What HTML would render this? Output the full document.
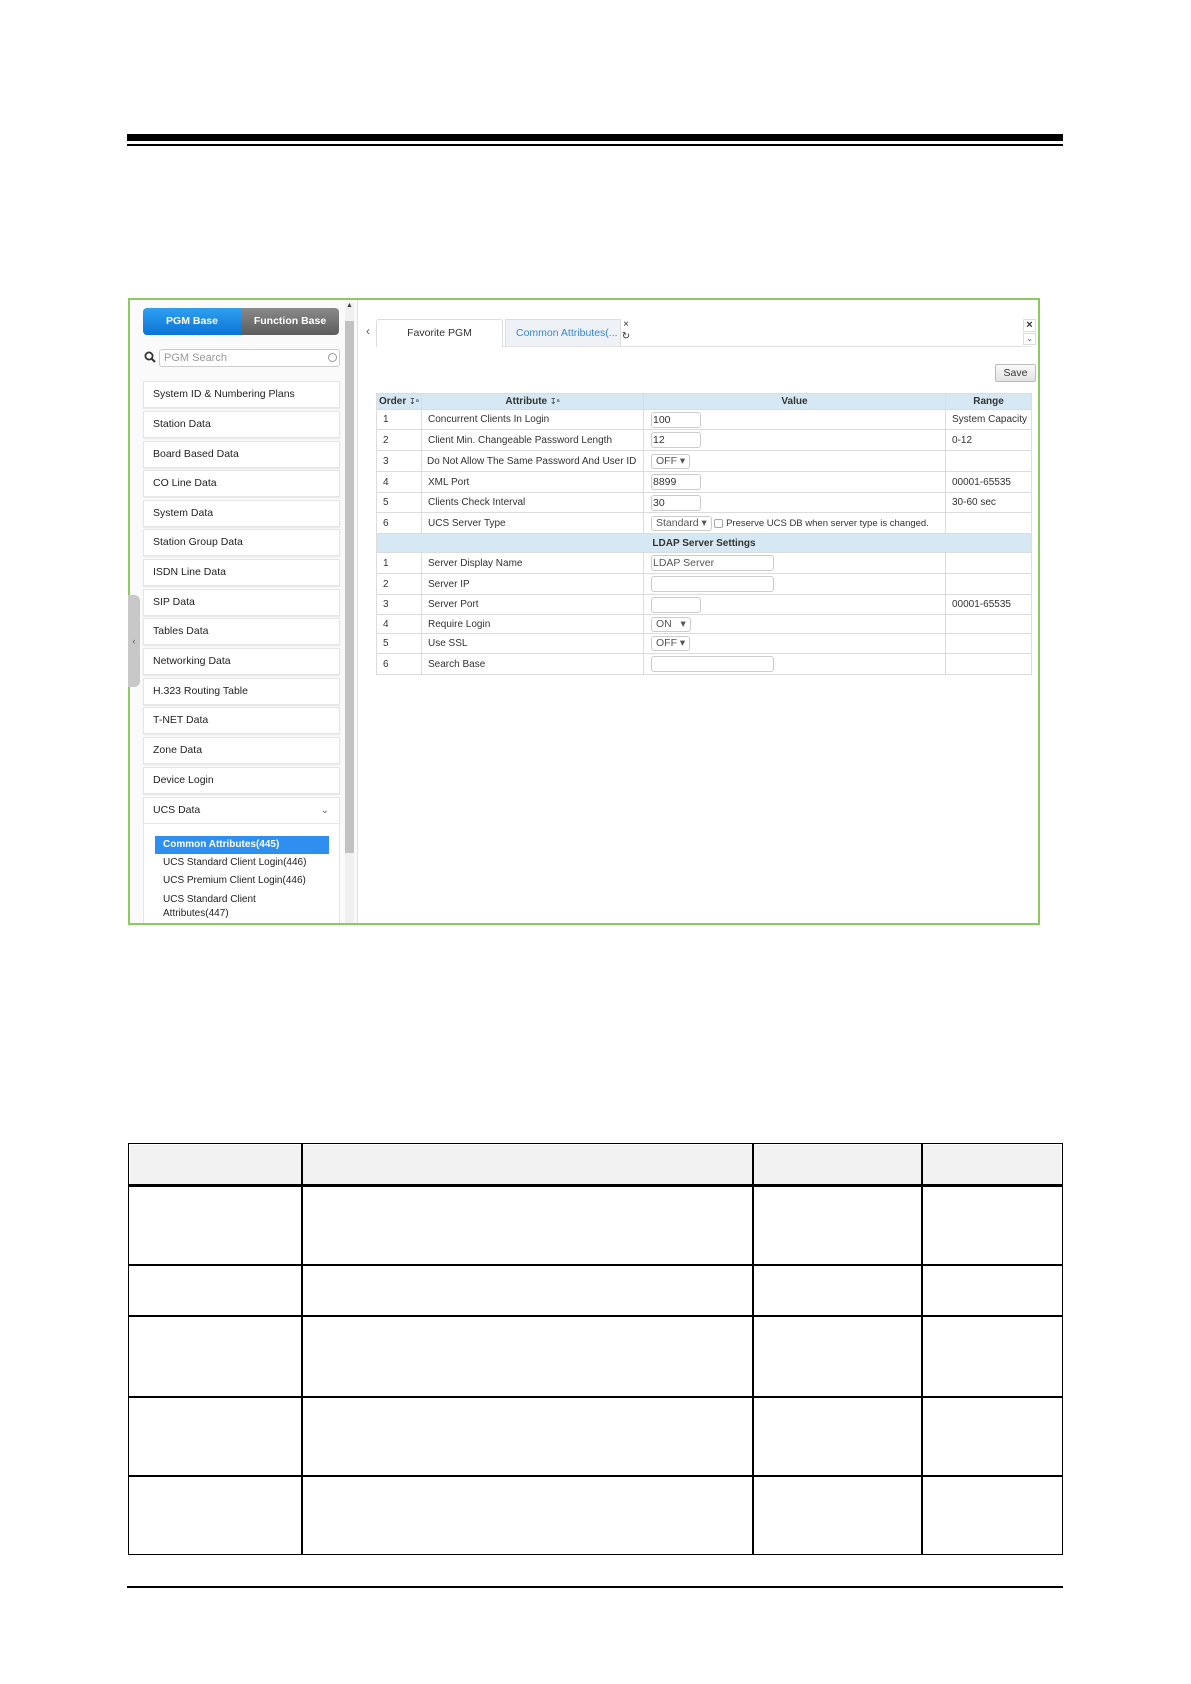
<!DOCTYPE html>
<html><head><meta charset="utf-8"><style>
*{box-sizing:border-box;margin:0;padding:0}
body{width:1191px;height:1684px;background:#fff;position:relative;font-family:"Liberation Sans",Arial,sans-serif;overflow:hidden}
.a{position:absolute}
.item{position:absolute;left:143px;width:197px;height:27px;background:#fff;border:1px solid #e6e6e6;box-shadow:0 1px 1px rgba(0,0,0,.08);font-size:10.5px;color:#222;padding-left:9px;line-height:25px}
.sub{position:absolute;left:155px;font-size:10px;color:#222}
table.t{position:absolute;left:376px;top:393px;width:655px;border-collapse:collapse;table-layout:fixed;font-size:10px;color:#333}
table.t td{border:1px solid #dcdcdc;padding:0 0 0 6px;white-space:nowrap;overflow:hidden}
table.t tr.h td{background:#d6e8f4;font-weight:bold;text-align:center;padding:0}
.inp{display:inline-block;border:1px solid #ccc;border-radius:3px;height:16px;vertical-align:middle;font-size:10.5px;line-height:14px;padding-left:1px;background:#fff;color:#333}
.sel{display:inline-block;border:1px solid #ccc;border-radius:3px;height:15px;font-size:10.5px;line-height:13px;padding:0 4px;color:#555;vertical-align:middle;background:#fff}
</style></head><body>
<div class="a" style="left:127px;top:134px;width:936px;height:7px;background:#000"></div>
<div class="a" style="left:127px;top:144px;width:936px;height:2px;background:#000"></div>

<div class="a" style="left:128px;top:298px;width:912px;height:627px;border:2px solid #8dc960;background:#fff"></div>
<div class="a" style="left:130px;top:300px;width:228px;height:623px;background:#fafafa"></div>
<div class="a" style="left:357px;top:300px;width:1px;height:623px;background:#e0e0e0"></div>
<div class="a" style="left:128px;top:595px;width:12px;height:92px;background:#c8c8c8;border-radius:0 6px 6px 0;font-size:9px;color:#555;line-height:92px;text-align:center">&lsaquo;</div>
<div class="a" style="left:345px;top:303px;width:9px;height:620px;background:#f0f0f0"></div>
<div class="a" style="left:345px;top:321px;width:9px;height:532px;background:#c2c2c2"></div>
<div class="a" style="left:346px;top:302px;font-size:7px;color:#444">&#9650;</div>
<div class="a" style="left:143px;top:308px;width:98px;height:27px;background:linear-gradient(#2fa0f0,#0b74d6);border-radius:4px 0 0 4px;color:#fff;font-size:10.5px;font-weight:bold;text-align:center;line-height:27px">PGM Base</div>
<div class="a" style="left:241px;top:308px;width:98px;height:27px;background:linear-gradient(#8a8a8a,#5c5c5c);border-radius:0 4px 4px 0;color:#fff;font-size:10.5px;font-weight:bold;text-align:center;line-height:27px">Function Base</div>
<svg class="a" style="left:144px;top:351px" width="12" height="12"><circle cx="5" cy="5" r="3.6" fill="none" stroke="#333" stroke-width="1.8"/><line x1="7.5" y1="7.5" x2="11" y2="11" stroke="#333" stroke-width="2"/></svg>
<div class="a" style="left:159px;top:349px;width:181px;height:18px;border:1px solid #ccc;border-radius:3px;background:#fff;font-size:11px;color:#999;padding-left:4px;line-height:16px">PGM Search</div>
<div class="a" style="left:328px;top:353px;width:9px;height:9px;border:1.5px solid #999;border-radius:50%"></div>

<div class="item" style="top:381px">System ID &amp; Numbering Plans</div>
<div class="item" style="top:411px">Station Data</div>
<div class="item" style="top:441px">Board Based Data</div>
<div class="item" style="top:470px">CO Line Data</div>
<div class="item" style="top:500px">System Data</div>
<div class="item" style="top:529px">Station Group Data</div>
<div class="item" style="top:559px">ISDN Line Data</div>
<div class="item" style="top:589px">SIP Data</div>
<div class="item" style="top:618px">Tables Data</div>
<div class="item" style="top:648px">Networking Data</div>
<div class="item" style="top:678px">H.323 Routing Table</div>
<div class="item" style="top:707px">T-NET Data</div>
<div class="item" style="top:737px">Zone Data</div>
<div class="item" style="top:767px">Device Login</div>
<div class="item" style="top:797px">UCS Data<span style="position:absolute;right:10px;top:0;font-size:10px;color:#666">&#8964;</span></div>
<div class="a" style="left:143px;top:824px;width:197px;height:99px;background:#fff;border-left:1px solid #e6e6e6;border-right:1px solid #e6e6e6"></div>
<div class="a" style="left:155px;top:836px;width:174px;height:18px;background:#2f8ff0;color:#fff;font-size:10px;font-weight:bold;padding-left:8px;line-height:18px">Common Attributes(445)</div>
<div class="sub" style="left:163px;top:857px">UCS Standard Client Login(446)</div>
<div class="sub" style="left:163px;top:875px">UCS Premium Client Login(446)</div>
<div class="sub" style="left:163px;top:893px;line-height:14px">UCS Standard Client<br>Attributes(447)</div>

<div class="a" style="left:366px;top:324px;font-size:12px;color:#555">&lsaquo;</div>
<div class="a" style="left:376px;top:346px;width:655px;height:1px;background:#e3e3e3"></div>
<div class="a" style="left:376px;top:319px;width:127px;height:28px;border:1px solid #ddd;border-bottom:none;border-radius:3px 3px 0 0;background:#fff;font-size:10.5px;color:#333;text-align:center;line-height:26px">Favorite PGM</div>
<div class="a" style="left:505px;top:319px;width:116px;height:27px;border:1px solid #ddd;border-bottom:none;background:#eef2f6;font-size:10.5px;color:#3a86d0;padding-left:10px;line-height:26px;white-space:nowrap;overflow:hidden">Common Attributes(...</div>
<div class="a" style="left:621px;top:319px;font-size:10px;color:#333;line-height:12px;text-align:center;width:10px">&#215;<br>&#8635;</div>
<div class="a" style="left:1023px;top:319px;width:13px;height:13px;border:1px solid #ddd;font-size:11px;line-height:11px;text-align:center;font-weight:bold;color:#333">&#215;</div>
<div class="a" style="left:1023px;top:333px;width:13px;height:12px;border:1px solid #ddd;font-size:8px;line-height:10px;text-align:center;color:#555">&#8964;</div>
<div class="a" style="left:995px;top:364px;width:41px;height:18px;border:1px solid #bbb;border-radius:2px;background:linear-gradient(#fafafa,#e2e2e2);font-size:10.5px;color:#333;text-align:center;line-height:16px">Save</div>

<table class="t">
<colgroup><col style="width:45px"><col style="width:222px"><col style="width:302px"><col style="width:86px"></colgroup>
<tr class="h" style="height:16px"><td style="text-align:left;padding-left:2px">Order <span style="font-weight:normal;font-size:8px">&#8615;&#7491;</span></td><td>Attribute <span style="font-weight:normal;font-size:8px">&#8615;&#7491;</span></td><td>Value</td><td>Range</td></tr>
<tr style="height:20px"><td>1</td><td>Concurrent Clients In Login</td><td style="padding-left:7px"><span class="inp" style="width:50px">100</span></td><td>System Capacity</td></tr>
<tr style="height:21px"><td>2</td><td>Client Min. Changeable Password Length</td><td style="padding-left:7px"><span class="inp" style="width:50px">12</span></td><td>0-12</td></tr>
<tr style="height:21px"><td>3</td><td style="padding-left:5px">Do Not Allow The Same Password And User ID</td><td style="padding-left:7px"><span class="sel">OFF &#9662;</span></td><td></td></tr>
<tr style="height:21px"><td>4</td><td>XML Port</td><td style="padding-left:7px"><span class="inp" style="width:50px">8899</span></td><td>00001-65535</td></tr>
<tr style="height:20px"><td>5</td><td>Clients Check Interval</td><td style="padding-left:7px"><span class="inp" style="width:50px">30</span></td><td>30-60 sec</td></tr>
<tr style="height:21px"><td>6</td><td>UCS Server Type</td><td style="padding-left:7px;font-size:9.5px"><span class="sel">Standard &#9662;</span> <span style="display:inline-block;width:9px;height:9px;border:1px solid #aaa;border-radius:2px;vertical-align:middle"></span> Preserve UCS DB when server type is changed.</td><td></td></tr>
<tr class="h" style="height:19px"><td colspan="4">LDAP Server Settings</td></tr>
<tr style="height:21px"><td>1</td><td>Server Display Name</td><td style="padding-left:7px"><span class="inp" style="width:123px;color:#555">LDAP Server</span></td><td></td></tr>
<tr style="height:21px"><td>2</td><td>Server IP</td><td style="padding-left:7px"><span class="inp" style="width:123px"></span></td><td></td></tr>
<tr style="height:20px"><td>3</td><td>Server Port</td><td style="padding-left:7px"><span class="inp" style="width:50px"></span></td><td>00001-65535</td></tr>
<tr style="height:19px"><td>4</td><td>Require Login</td><td style="padding-left:7px"><span class="sel">ON &nbsp;&nbsp;&#9662;</span></td><td></td></tr>
<tr style="height:20px"><td>5</td><td>Use SSL</td><td style="padding-left:7px"><span class="sel">OFF &#9662;</span></td><td></td></tr>
<tr style="height:21px"><td>6</td><td>Search Base</td><td style="padding-left:7px"><span class="inp" style="width:123px"></span></td><td></td></tr>
</table>

<div class="a" style="left:128px;top:1143px;width:935px;height:412px;border:1.5px solid #000"></div>
<div class="a" style="left:130px;top:1145px;width:931px;height:40px;background:#f2f2f2"></div>
<div class="a" style="left:128px;top:1184px;width:935px;height:3px;background:#000"></div>
<div class="a" style="left:128px;top:1264px;width:935px;height:2px;background:#000"></div>
<div class="a" style="left:128px;top:1315px;width:935px;height:1.5px;background:#000"></div>
<div class="a" style="left:128px;top:1396px;width:935px;height:2px;background:#000"></div>
<div class="a" style="left:128px;top:1475px;width:935px;height:1.5px;background:#000"></div>
<div class="a" style="left:301px;top:1143px;width:1.5px;height:412px;background:#000"></div>
<div class="a" style="left:752px;top:1143px;width:1.5px;height:412px;background:#000"></div>
<div class="a" style="left:921px;top:1143px;width:2px;height:412px;background:#000"></div>

<div class="a" style="left:127px;top:1586px;width:936px;height:2px;background:#000"></div>
</body></html>
